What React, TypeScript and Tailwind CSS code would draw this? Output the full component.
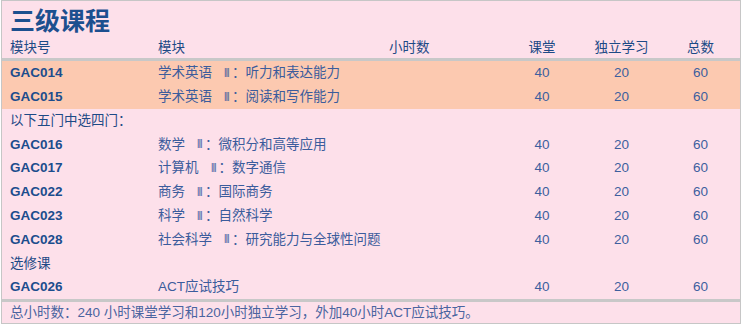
const font = { fontFamily: '"Liberation Sans", "Noto Sans CJK SC", sans-serif' };

interface Course {
  code: string;
  name: string;
  roman?: boolean;
  suffix?: string;
}

const required: Course[] = [
  { code: 'GAC014', name: '学术英语', roman: true, suffix: '听力和表达能力' },
  { code: 'GAC015', name: '学术英语', roman: true, suffix: '阅读和写作能力' },
];

const optional: Course[] = [
  { code: 'GAC016', name: '数学', roman: true, suffix: '微积分和高等应用' },
  { code: 'GAC017', name: '计算机', roman: true, suffix: '数字通信' },
  { code: 'GAC022', name: '商务', roman: true, suffix: '国际商务' },
  { code: 'GAC023', name: '科学', roman: true, suffix: '自然科学' },
  { code: 'GAC028', name: '社会科学', roman: true, suffix: '研究能力与全球性问题' },
];

const grid = 'grid grid-cols-[156px_231px_113px_80px_79px_79px] items-center';

function Row({ course, peach }: { course: Course; peach?: boolean }) {
  return (
    <div className={`${grid} h-[23.8px] ${peach ? 'bg-[#fcc9b0]' : ''}`}>
      <div className="pl-[8px] font-bold text-[#1b4d8d]">{course.code}</div>
      <div className="text-[#3b5c9c] whitespace-nowrap flex items-center">
        <span>{course.name}</span>
        {course.roman && (
          <>
            <span
              className="ml-[12px] text-[12px] scale-x-[0.75] origin-left inline-block w-[8px]"
              style={{ fontFamily: '"DejaVu Sans Condensed", "DejaVu Sans", sans-serif' }}
            >
              Ⅲ
            </span>
            <span>：</span>
          </>
        )}
        <span>{course.suffix}</span>
      </div>
      <div />
      <div className="text-center text-[#3d5f9e]">40</div>
      <div className="text-center text-[#3d5f9e]">20</div>
      <div className="text-center text-[#3d5f9e]">60</div>
    </div>
  );
}

function Label({ text }: { text: string }) {
  return (
    <div className="h-[23.8px] flex items-center pl-[8px] text-[#1d4a86]">{text}</div>
  );
}

export default function App() {
  return (
    <div className="w-[744px] h-[327px] bg-white pl-[1px]" style={font}>
      <div className="w-[740px] h-[324px] border border-[#c6c6c6] bg-[#fde0ea] text-[13.5px] leading-none flex flex-col">
        <div className="h-[37px] flex items-center pl-[8px] pt-[4px] text-[25px] font-bold text-[#1c4f8f]">
          三级课程
        </div>
        <div className={`${grid} h-[20px] text-[#1d4a86]`}>
          <div className="pl-[8px]">模块号</div>
          <div>模块</div>
          <div>小时数</div>
          <div className="text-center">课堂</div>
          <div className="text-center">独立学习</div>
          <div className="text-center">总数</div>
        </div>
        <div className="h-[3px] bg-[#c8c8c8]" />
        {required.map((c) => (
          <Row key={c.code} course={c} peach />
        ))}
        <Label text="以下五门中选四门：" />
        {optional.map((c) => (
          <Row key={c.code} course={c} />
        ))}
        <Label text="选修课" />
        <Row course={{ code: 'GAC026', name: 'ACT应试技巧' }} />
        <div className="h-[3px] bg-[#c8c8c8]" />
        <div className="flex-1 flex items-center pl-[8px] text-[#4a64a0]">
          总小时数：240 小时课堂学习和120小时独立学习，外加40小时ACT应试技巧。
        </div>
      </div>
    </div>
  );
}
